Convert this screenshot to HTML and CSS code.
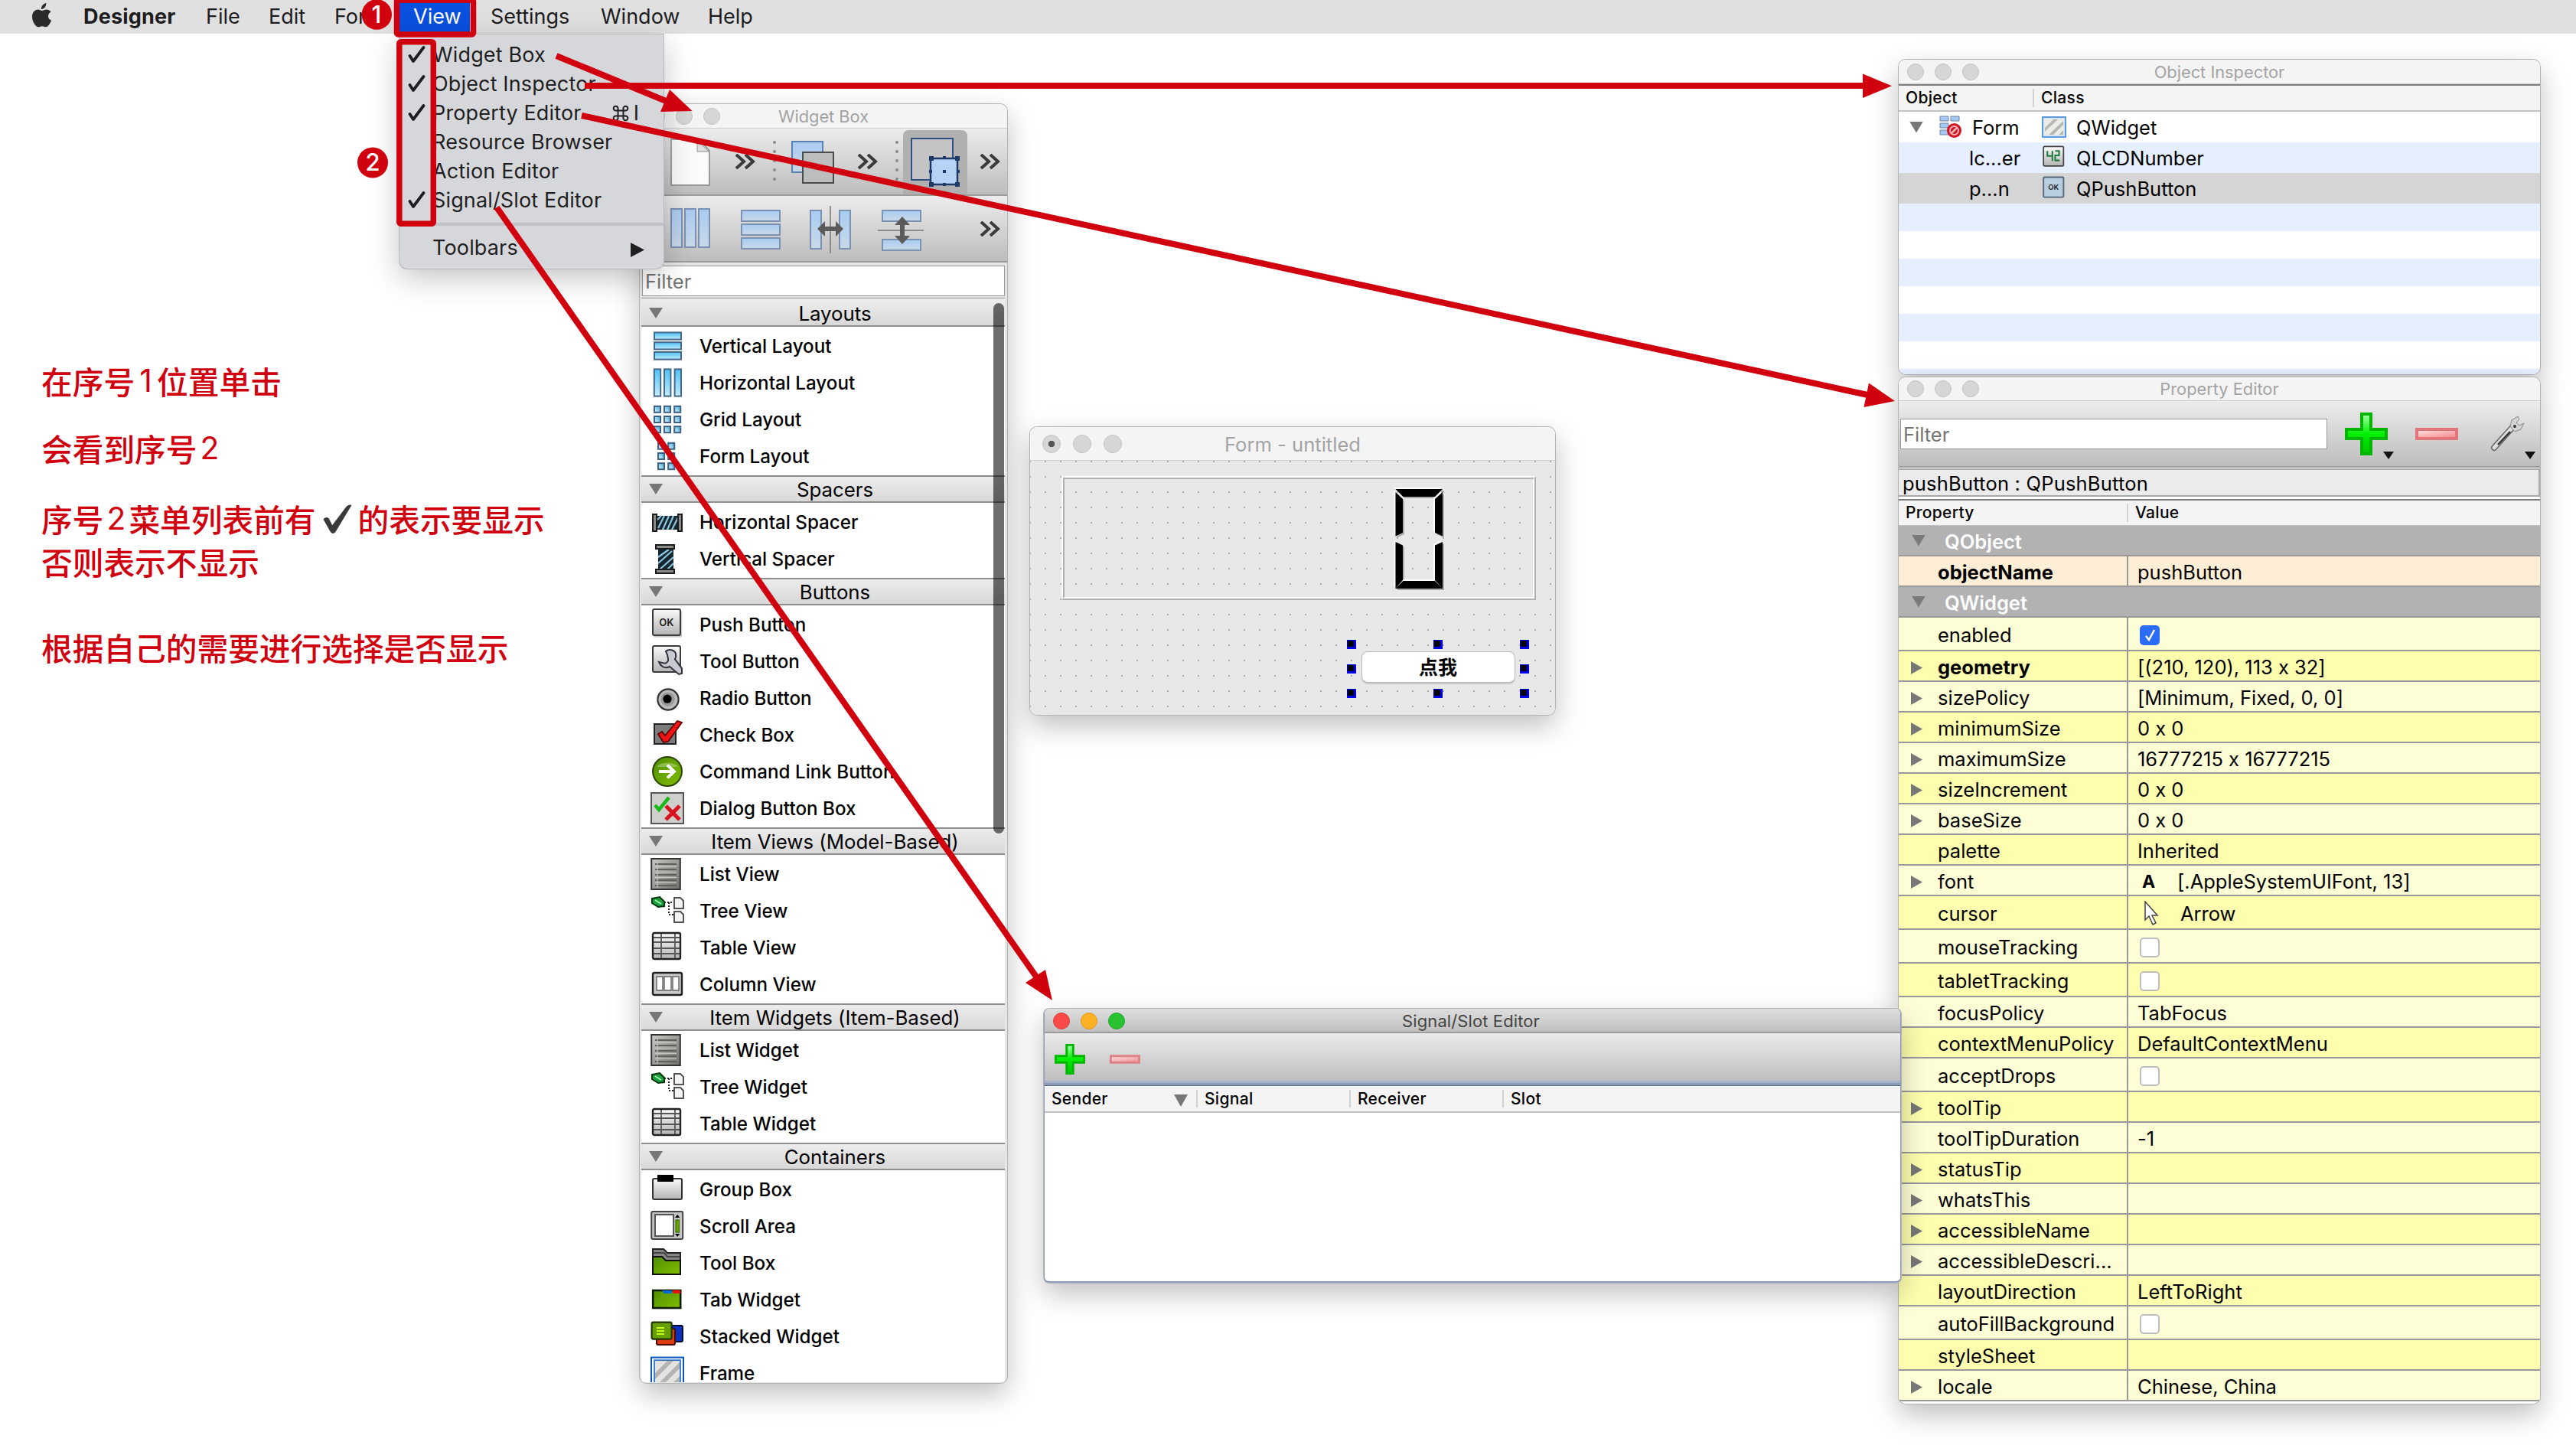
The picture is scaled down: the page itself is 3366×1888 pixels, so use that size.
FILE: index.html
```html
<!DOCTYPE html>
<html lang="zh-CN">
<head>
<meta charset="utf-8">
<title>Designer</title>
<link rel="stylesheet" href="styles.css">
</head>
<body>
<svg class="defs" width="0" height="0">
  <defs>
    <linearGradient id="cy" x1="0" y1="0" x2="0" y2="1"><stop offset="0" stop-color="#4cc3f5"/><stop offset="1" stop-color="#c5ecfb"/></linearGradient>
    <linearGradient id="cyd" x1="1" y1="0" x2="0" y2="1"><stop offset="0" stop-color="#37a9dc"/><stop offset="1" stop-color="#e4f7ff"/></linearGradient>
    <linearGradient id="bl" x1="0" y1="0" x2="0" y2="1"><stop offset="0" stop-color="#a9cbf2"/><stop offset="1" stop-color="#c9d9e8"/></linearGradient>
    <linearGradient id="gr" x1="0" y1="0" x2="0" y2="1"><stop offset="0" stop-color="#fafafa"/><stop offset="1" stop-color="#b4b4b4"/></linearGradient>
    <linearGradient id="gd" x1="0" y1="0" x2="1" y2="1"><stop offset="0" stop-color="#c8c8c4"/><stop offset="1" stop-color="#6e6e6a"/></linearGradient>
    <linearGradient id="gn" x1="0" y1="0" x2="1" y2="1"><stop offset="0" stop-color="#4f8f00"/><stop offset="1" stop-color="#80bd00"/></linearGradient>
    <linearGradient id="pl" x1="0" y1="0" x2="0" y2="1"><stop offset="0" stop-color="#9dff9d"/><stop offset=".5" stop-color="#00f000"/><stop offset="1" stop-color="#00c800"/></linearGradient>
    <linearGradient id="mi" x1="0" y1="0" x2="1" y2="1"><stop offset="0" stop-color="#ffd9d9"/><stop offset="1" stop-color="#f58d92"/></linearGradient>
  </defs>
  <symbol id="i-vl" viewBox="0 0 22 22"><g fill="url(#cy)" stroke="#46688a"><rect x="2.5" y="2.2" width="17.5" height="4.6"/><rect x="2.5" y="8.6" width="17.5" height="4.6"/><rect x="2.5" y="15" width="17.5" height="4.8"/></g></symbol>
  <symbol id="i-hl" viewBox="0 0 22 22"><g fill="url(#cy)" stroke="#46688a"><rect x="2.4" y="2.2" width="4.2" height="17.6"/><rect x="9" y="2.2" width="4.2" height="17.6"/><rect x="15.8" y="2.2" width="4.2" height="17.6"/></g></symbol>
  <symbol id="i-gl" viewBox="0 0 22 22"><g fill="url(#cyd)" stroke="#3f5f80"><rect x="2.5" y="2.4" width="4" height="4"/><rect x="9" y="2.4" width="4" height="4"/><rect x="15.6" y="2.4" width="4" height="4"/><rect x="2.5" y="9" width="4" height="4"/><rect x="9" y="9" width="4" height="4"/><rect x="15.6" y="9" width="4" height="4"/><rect x="2.5" y="15.6" width="4" height="4"/><rect x="9" y="15.6" width="4" height="4"/><rect x="15.6" y="15.6" width="4" height="4"/></g></symbol>
  <symbol id="i-fl" viewBox="0 0 22 22"><g fill="url(#cyd)" stroke="#3f5f80"><rect x="5" y="2.4" width="4" height="4"/><rect x="11.6" y="2.4" width="4" height="4"/><rect x="5" y="9" width="4" height="4"/><rect x="11.6" y="9" width="4" height="4"/><rect x="5" y="15.6" width="4" height="4"/><rect x="11.6" y="15.6" width="4" height="4"/></g></symbol>
  <symbol id="i-hs" viewBox="0 0 22 22"><path d="M4 7h14v9H4z" fill="#152832"/><path d="M5 15l4-8M8 16l4-9M11 16l4-9M14 16l4-8M4 10l3-3" stroke="#8ec4dc" stroke-width="1.1"/><rect x="1.5" y="6" width="2.5" height="11" fill="#8a8a8a" stroke="#1c1c1c"/><rect x="18" y="6" width="2.500" height="11" fill="#8a8a8a" stroke="#1c1c1c"/></symbol>
  <symbol id="i-vs" viewBox="0 0 22 22"><path d="M5 4h10v15H5z" fill="#152832"/><path d="M5 10l7-5M5 14l9-8M6 18l9-8M10 19l5-5" stroke="#8ec4dc" stroke-width="1.1"/><rect x="3.5" y="2" width="12" height="2.5" fill="#8a8a8a" stroke="#1c1c1c"/><rect x="3.5" y="18" width="12" height="2.5" fill="#8a8a8a" stroke="#1c1c1c"/></symbol>
  <symbol id="i-pb" viewBox="0 0 22 22"><rect x="2" y="2" width="18.6" height="17.4" rx="1" fill="#777" opacity=".4"/><rect x="1.5" y="1" width="18" height="17" rx="1" fill="url(#gr)" stroke="#3a3a3a"/><text x="10.4" y="12.2" text-anchor="middle" class="ok">OK</text></symbol>
  <symbol id="i-tb" viewBox="0 0 22 22"><rect x="1.5" y="1" width="18" height="17" rx="1" fill="url(#gr)" stroke="#3a3a3a"/><path d="M10 4.500c2.500-2 6-.5 6.500 1.500.4 1.500 0 2.700-.5 3.700l4.500 6V19l-2 .5-6-5c-2.500 1.200-5.500.6-7-3l3.500.8c1.500.3 3-1.500 2.500-3l-.5-2.500z" fill="#c9c9d4" stroke="#33333c" stroke-width="1"/></symbol>
  <symbol id="i-rb" viewBox="0 0 22 22"><circle cx="11.500" cy="12" r="6.800" fill="#bbb" stroke="#333" stroke-width="1.100"/><circle cx="11.300" cy="11.800" r="4.600" fill="#999"/><circle cx="11" cy="11.600" r="2.800" fill="#000"/></symbol>
  <symbol id="i-cb" viewBox="0 0 22 22"><rect x="2.500" y="4" width="14" height="13" fill="#7b7b7b" stroke="#222"/><path d="M5 10.500l2.500-1.500 2 2.500 8-9.500 3 1-9 12.500-3 .5z" fill="#f01414" stroke="#5d0000" stroke-width=".9"/></symbol>
  <symbol id="i-cl" viewBox="0 0 22 22"><circle cx="11" cy="11" r="9.500" fill="url(#gn)" stroke="#2a4400" stroke-width="1"/><path d="M4 8a8 5 0 0 1 14 0z" fill="#fff" opacity=".3"/><path d="M5.500 11h9M11 6.800l4.500 4.200-4.500 4.200" fill="none" stroke="#fff" stroke-width="2"/></symbol>
  <symbol id="i-db" viewBox="0 0 22 22"><rect x=".5" y="1" width="21" height="20" fill="#cfcfcb" stroke="#555"/><path d="M3 9l2.500 3L12 4" fill="none" stroke="#18b818" stroke-width="2.200"/><path d="M10 9.500l9 9M19 9.500l-9 9" stroke="#d81420" stroke-width="2.600"/></symbol>
  <symbol id="i-lv" viewBox="0 0 22 22"><rect x=".6" y="1" width="18.800" height="20" fill="url(#gd)" stroke="#333"/><path d="M3 4.500h14M3 8h14M3 11.500h14M3 15h14M3 18.500h14" stroke="#5f5f5c" stroke-width="1.100"/><path d="M3 6.200h14M3 9.700h14M3 13.200h14M3 16.700h14M4.500 3v17" stroke="#c4c4c0" stroke-width=".6"/></symbol>
  <symbol id="i-tv" viewBox="0 0 22 22"><path d="M1 3l5-1 3 3v3l-4 .5L1 6z" fill="#1aa038" stroke="#053510"/><path d="M3 4l4 2.500" stroke="#a5f0b5"/><path d="M9 5.500h6M12 5.500v8h3" fill="none" stroke="#222" stroke-dasharray="1 1"/><path d="M15.500 2.500h4l2 2v5h-6zM15.500 11.500h4l2 2v5h-6z" fill="#f4f4f4" stroke="#555"/></symbol>
  <symbol id="i-tw" viewBox="0 0 22 22"><rect x="1.500" y="1.500" width="18" height="17" rx="1" fill="url(#gr)" stroke="#222" stroke-width="1.200"/><path d="M2 4.500h17M2 7.500h17M2 11.500h17M2 15h17M7 2v16M16 2v16" stroke="#555" stroke-width=".9"/></symbol>
  <symbol id="i-cv" viewBox="0 0 22 22"><rect x="1.500" y="3.500" width="19" height="14.500" rx="1" fill="#c8c8c8" stroke="#222" stroke-width="1.200"/><path d="M4 6h4v9H4zM9 6h4.500v9H9zM14.500 6h4v9h-4z" fill="#fff" stroke="#666" stroke-width=".7"/></symbol>
  <symbol id="i-gb" viewBox="0 0 22 22"><rect x="1.500" y="4" width="19" height="13.500" rx="1" fill="url(#gr)" stroke="#333"/><rect x="4.500" y="1.500" width="10.500" height="4.500" fill="#000"/></symbol>
  <symbol id="i-sa" viewBox="0 0 22 22"><rect x=".6" y="1.500" width="20.500" height="18" rx="1" fill="#c4c4c4" stroke="#444"/><rect x="3" y="3.500" width="12" height="14" fill="#fff" stroke="#555"/><rect x="16.500" y="7" width="2.200" height="8" fill="#6aa800" stroke="#3c6800" stroke-width=".6"/><path d="M16 5.500l1.600-2 1.600 2zM16 16l1.600 2 1.600-2z"/></symbol>
  <symbol id="i-bx" viewBox="0 0 22 22"><path d="M1.500 2h7l2.500 2.500h8.500V18h-18z" fill="#858585" stroke="#222"/><path d="M2 4.500h7l2 2.500h8.500" fill="none" stroke="#333" stroke-width=".7"/><path d="M1.500 7h6l2.500 2.500h9.500V18.500h-18z" fill="url(#gn)" stroke="#111"/></symbol>
  <symbol id="i-ta" viewBox="0 0 22 22"><rect x="1.600" y="5" width="18" height="11.500" fill="url(#gn)" stroke="#0e1c00" stroke-width="1.300"/><path d="M7.500 5h6.500v2H9z" fill="#0068d8"/><path d="M14.500 4.800h5V7h-5z" fill="#e81010"/></symbol>
  <symbol id="i-sw" viewBox="0 0 22 22"><rect x="12" y="4" width="9" height="10.500" rx="1" fill="#0a32c0" stroke="#000a30"/><rect x="4" y="6" width="12" height="10.500" rx="1" fill="#dd3a10" stroke="#4a0c00"/><rect x=".8" y="1.800" width="13" height="11" rx="1" fill="#67a000" stroke="#203500" stroke-width="1.100"/><path d="M4 5.500h5M4 7.500h5M4 9.500h5" stroke="#c6ff20"/></symbol>
  <symbol id="i-fr" viewBox="0 0 22 22"><rect x=".5" y=".8" width="21" height="21" fill="#fff" stroke="#0a55b8"/><rect x="2.500" y="2.600" width="17" height="18" fill="#e4e4e2" stroke="#2a74c8" stroke-width=".9"/><path d="M3 11l8-8h4L3 15zM3 20L19 4v4L7 20zM12 20l7-7v4l-3 3z" fill="#b4b4b0"/></symbol>
  <symbol id="i-lcd" viewBox="0 0 22 22"><rect x="1.500" y="1" width="18" height="17.500" rx="1" fill="url(#gr)" stroke="#444" stroke-width="1.200"/><path d="M5 5v4.500h4.500V5M9.500 9.500V14M12 5h3.500v4H12v4.500h4" fill="none" stroke="#1c7a3c" stroke-width="1.400"/></symbol>
  <symbol id="i-plus" viewBox="0 0 56 56"><path d="M20 0h16v20h20v16H36v20H20V36H0V20h20z" fill="#00b400"/><path d="M24 4h8v20h20v8H32v20h-8V32H4v-8h20z" fill="url(#pl)"/></symbol>
  <symbol id="i-minus" viewBox="0 0 56 16"><path d="M0 0h56v16H0z" fill="#e2757a"/><path d="M4 4h48v8H4z" fill="url(#mi)"/></symbol>
  <symbol id="i-more" viewBox="0 0 28 20"><path d="M2 1l10 9-10 9M14 1l10 9-10 9" fill="none" stroke="#3b3b3b" stroke-width="4"/></symbol>
  <symbol id="i-tick" viewBox="0 0 23 22"><path d="M2.500 13l4.500 7L20.500 2" fill="none" stroke="#1f1f22" stroke-width="3.800" stroke-linecap="round" stroke-linejoin="round"/></symbol>
</svg>

<header class="menubar">
  <svg class="apple" viewBox="0 0 26 32"><path d="M18.300 0c.3 2.500-.8 4.600-2.100 6.100-1.300 1.400-2.900 2.100-4.300 1.900-.2-2.300.8-4.300 2-5.600C15.200 1 16.900.1 18.300 0z"/><path d="M25 22.600c-1.500 4.500-4.200 8.700-7 8.700-1.900 0-2.700-1.100-4.900-1.100s-3 1.100-4.900 1.100C4.600 31.300 0 24.500 0 18 0 12.200 3.500 8.500 7.600 8.500c2.200 0 4 1.400 5.400 1.400 1.300 0 3.300-1.500 5.900-1.500 2.100 0 4.300 1.100 5.700 3.100-5.300 3.200-4.300 9.500.4 11.100z"/></svg>
  <b class="mb-app">Designer</b><span class="mb-file">File</span><span class="mb-edit">Edit</span><span class="mb-form">Form</span><span class="mb-view">View</span><span class="mb-set">Settings</span><span class="mb-win">Window</span><span>Help</span>
</header>

<section class="notes">
  <p>在序号<i class="n1">1</i>位置单击</p>
  <p>会看到序号<i class="n2">2</i></p>
  <p>序号<i class="n2">2</i>菜单列表前有<svg class="bigtick" viewBox="0 0 40 40"><path d="M1 20c3-4 7-3 8 0l4 8L31 4c3-4 7-4 8-3L18 36c-2 4-6 4-8 0z"/></svg>的表示要显示</p>
  <p>否则表示不显示</p>
  <p>根据自己的需要进行选择是否显示</p>
</section>

<section class="win wbox">
  <div class="title"><span class="lights"><i></i><i></i><i></i></span>Widget Box</div>
  <div class="tools">
    <svg viewBox="0 0 480 86" width="480" height="86">
      <path d="M41 14h36l14 15v45H41z" fill="url(#gr)" stroke="#8b8b8b" stroke-width="1.500"/><path d="M42 15h33v16h15v42H42z" fill="#fbfbfb"/><path d="M75 15v15h15z" fill="#ddd" stroke="#999"/>
      <use href="#i-more" x="124" y="33" width="28" height="20"/>
      <g fill="#8a8a8a"><circle cx="176" cy="18" r="2"/><circle cx="176" cy="30" r="2"/><circle cx="176" cy="42" r="2"/><circle cx="176" cy="54" r="2"/><circle cx="176" cy="66" r="2"/><circle cx="336" cy="18" r="2"/><circle cx="336" cy="30" r="2"/><circle cx="336" cy="42" r="2"/><circle cx="336" cy="54" r="2"/><circle cx="336" cy="66" r="2"/></g>
      <rect x="199" y="17" width="40" height="40" fill="url(#bl)" stroke="#5a80b4" stroke-width="2"/><rect x="213" y="31" width="40" height="40" fill="#bdbdbd" stroke="#4c4c4c" stroke-width="2"/>
      <use href="#i-more" x="284" y="33" width="28" height="20"/>
      <path d="M344 86V10q0-8 8-8h68q8 0 8 8v76z" fill="#b0b0b0"/>
      <rect x="355" y="13" width="54" height="54" fill="#c4c4c4" stroke="#2f5080" stroke-width="2"/><rect x="380" y="39" width="35" height="34" fill="#b6d2f4" stroke="#1c3a68" stroke-width="2.500"/>
      <g fill="#1c3a68"><path d="M378 36h6v6h-6zM412 36h6v6h-6zM378 70h6v6h-6zM412 70h6v6h-6zM396 54h4v4h-4zM396 36h4v4h-4zM396 71h4v4h-4zM378 54h4v4h-4zM414 54h4v4h-4z"/></g>
      <use href="#i-more" x="444" y="33" width="28" height="20"/>
    </svg>
  </div>
  <div class="tools">
    <svg viewBox="0 0 480 86" width="480" height="86">
      <g fill="url(#bl)" stroke="#7b91b2" stroke-width="2"><path d="M41 17h14v50H41z"/><path d="M59 17h14v50H59z"/><path d="M77 17h14v50H77z"/><path d="M133 19h50v14h-50z"/><path d="M133 37h50v14h-50z"/><path d="M133 55h50v14h-50z"/><path d="M223 19h14v50h-14z"/><path d="M261 19h14v50h-14z"/><path d="M317 19h50v14h-50z"/><path d="M317 57h50v14h-50z"/></g>
      <path d="M249 13v62M311 45h60" stroke="#777" stroke-width="1.500"/>
      <path d="M232 43l10-10v7h14v-7l10 10-10 10v-7h-14v7zM343 27l10 11h-7v14h7l-10 11-10-11h7V38h-7z" fill="#5b5b5b"/>
      <use href="#i-more" x="444" y="33" width="28" height="20"/>
    </svg>
  </div>
  <div class="filter">Filter</div>
  <div class="list">
    <h3>Layouts</h3>
    <ul><li><svg><use href="#i-vl"/></svg>Vertical Layout</li><li><svg><use href="#i-hl"/></svg>Horizontal Layout</li><li><svg><use href="#i-gl"/></svg>Grid Layout</li><li><svg><use href="#i-fl"/></svg>Form Layout</li></ul>
    <h3>Spacers</h3>
    <ul><li><svg><use href="#i-hs"/></svg>Horizontal Spacer</li><li><svg><use href="#i-vs"/></svg>Vertical Spacer</li></ul>
    <h3>Buttons</h3>
    <ul><li><svg><use href="#i-pb"/></svg>Push Button</li><li><svg><use href="#i-tb"/></svg>Tool Button</li><li><svg><use href="#i-rb"/></svg>Radio Button</li><li><svg><use href="#i-cb"/></svg>Check Box</li><li><svg><use href="#i-cl"/></svg>Command Link Button</li><li><svg><use href="#i-db"/></svg>Dialog Button Box</li></ul>
    <h3>Item Views (Model-Based)</h3>
    <ul><li><svg><use href="#i-lv"/></svg>List View</li><li><svg><use href="#i-tv"/></svg>Tree View</li><li><svg><use href="#i-tw"/></svg>Table View</li><li><svg><use href="#i-cv"/></svg>Column View</li></ul>
    <h3>Item Widgets (Item-Based)</h3>
    <ul><li><svg><use href="#i-lv"/></svg>List Widget</li><li><svg><use href="#i-tv"/></svg>Tree Widget</li><li><svg><use href="#i-tw"/></svg>Table Widget</li></ul>
    <h3>Containers</h3>
    <ul><li><svg><use href="#i-gb"/></svg>Group Box</li><li><svg><use href="#i-sa"/></svg>Scroll Area</li><li><svg><use href="#i-bx"/></svg>Tool Box</li><li><svg><use href="#i-ta"/></svg>Tab Widget</li><li><svg><use href="#i-sw"/></svg>Stacked Widget</li><li><svg><use href="#i-fr"/></svg>Frame</li></ul>
    <div class="scroll"></div>
  </div>
</section>

<section class="menu">
  <div class="mi"><svg class="tick"><use href="#i-tick"/></svg>Widget Box</div>
  <div class="mi"><svg class="tick"><use href="#i-tick"/></svg>Object Inspector</div>
  <div class="mi"><svg class="tick"><use href="#i-tick"/></svg>Property Editor<svg class="cmd" viewBox="0 0 22 22"><path d="M7.500 7.500h7v7h-7zM7.500 7.500H4.700a2.900 2.900 0 1 1 2.800-2.800zM14.500 7.500V4.700a2.900 2.900 0 1 1 2.800 2.800zM14.500 14.500h2.800a2.900 2.900 0 1 1-2.800 2.800zM7.500 14.500v2.800a2.900 2.900 0 1 1-2.800-2.800z"/></svg>I</div>
  <div class="mi">Resource Browser</div>
  <div class="mi">Action Editor</div>
  <div class="mi"><svg class="tick"><use href="#i-tick"/></svg>Signal/Slot Editor</div>
  <hr>
  <div class="mi">Toolbars<i class="sub"></i></div>
</section>

<section class="win form">
  <div class="title"><span class="lights"><i class="dot"></i><i></i><i></i></span>Form - untitled</div>
  <div class="canvas">
    <div class="lcd">
      <svg viewBox="0 0 66 134" width="66" height="134">
        <g fill="#aaa" transform="translate(2 2)"><path d="M2.500 2H64L54 12H12.500zM2.500 6l9.500 9v44l-9.500 4.500zM64 6l-10 9v44l10 4.500zM2.500 71l9.500 4.500V121l-9.500 11zM64 71l-10 4.500V121l10 11zM12.500 122H54l10 10H2.500z"/></g>
        <g fill="#fff" transform="translate(-2 -2)"><path d="M2.500 2H64L54 12H12.500zM2.500 6l9.500 9v44l-9.500 4.500zM64 6l-10 9v44l10 4.500zM2.500 71l9.500 4.500V121l-9.500 11zM64 71l-10 4.500V121l10 11zM12.500 122H54l10 10H2.500z"/></g>
        <path d="M2.500 2H64L54 12H12.500zM2.500 6l9.500 9v44l-9.500 4.500zM64 6l-10 9v44l10 4.500zM2.500 71l9.500 4.500V121l-9.500 11zM64 71l-10 4.500V121l10 11zM12.500 122H54l10 10H2.500z"/>
      </svg>
    </div>
    <div class="sel">
      <i></i><i></i><i></i><i></i><b class="btn">点我</b><i></i><i></i><i></i><i></i>
    </div>
  </div>
</section>

<section class="win insp">
  <div class="title"><span class="lights"><i></i><i></i><i></i></span>Object Inspector</div>
  <div class="thead"><span class="c1">Object</span><span class="c2">Class</span></div>
  <div class="tree">
    <div class="tr"><i class="down"></i><svg class="fi" viewBox="0 0 30 30"><g fill="#a5c8f0" stroke="#6c87ac"><path d="M1 1h11v6H1zM15 1h11v6H15zM1 10h11v6H1zM1 19h11v6H1z"/></g><circle cx="19.500" cy="19.500" r="9.500" fill="#d01420"/><circle cx="19.500" cy="19.500" r="5.500" fill="none" stroke="#f3b4b8" stroke-width="2"/><path d="M15.500 23.500l8-8" stroke="#f3b4b8" stroke-width="2.500"/></svg><span class="o1">Form</span><svg class="ci" viewBox="0 0 32 32"><rect x="1" y="3" width="30" height="26" fill="#dbe7f4" stroke="#5b9bdc" stroke-width="2"/><path d="M4 6h24v20H4z" fill="#ecece8"/><path d="M4 17L15 6h6L4 22zM9 26L28 8v5L15 26zM22 26l6-6v6z" fill="#b8b8b2"/></svg>QWidget</div>
    <div class="tr alt"><span class="o2">lc...er</span><svg class="ci"><use href="#i-lcd"/></svg>QLCDNumber</div>
    <div class="tr cur"><span class="o2">p...n</span><svg class="ci" viewBox="0 0 22 22"><rect x="1.500" y="1" width="18" height="18" rx="1" fill="#b8cde0" stroke="#556878" stroke-width="1.300"/><text x="10.400" y="12.600" text-anchor="middle" class="ok">OK</text></svg>QPushButton</div>
    <div class="fill"></div>
  </div>
</section>

<section class="win prop">
  <div class="title"><span class="lights"><i></i><i></i><i></i></span>Property Editor</div>
  <div class="ptools">
    <div class="pfilter">Filter</div>
    <svg class="pplus"><use href="#i-plus"/></svg><i class="dd d1"></i>
    <svg class="pminus"><use href="#i-minus"/></svg>
    <svg class="wrench" viewBox="0 0 46 48"><path d="M33 12L6 42" stroke="#666" stroke-width="8" stroke-linecap="round"/><path d="M32 13L6 42" stroke="#ddd" stroke-width="5" stroke-linecap="round"/><path d="M27 21L11 38" stroke="#333" stroke-width="2.500"/><path d="M37 1l-8 5-2 8 6 7 8-3 4-8-6 3-4-4 4-4z" fill="#d4d4d4" stroke="#888"/><circle cx="33" cy="14" r="2" fill="#333"/></svg><i class="dd"></i>
  </div>
  <div class="plabel">pushButton : QPushButton</div>
  <div class="thead pt"><span class="c1">Property</span><span class="c2">Value</span></div>
  <div class="grp"><i class="down"></i>QObject</div>
  <div class="pr peach"><b>objectName</b><span>pushButton</span></div>
  <div class="grp"><i class="down"></i>QWidget</div>
  <div class="pr tall"><em>enabled</em><span><i class="chk on"><svg viewBox="0 0 26 26"><path d="M8 14l4 5 7-13"/></svg></i></span></div>
  <div class="pr y"><b><i class="rt"></i>geometry</b><span>[(210, 120), 113 x 32]</span></div>
  <div class="pr"><em><i class="rt"></i>sizePolicy</em><span>[Minimum, Fixed, 0, 0]</span></div>
  <div class="pr y"><em><i class="rt"></i>minimumSize</em><span>0 x 0</span></div>
  <div class="pr"><em><i class="rt"></i>maximumSize</em><span>16777215 x 16777215</span></div>
  <div class="pr y"><em><i class="rt"></i>sizeIncrement</em><span>0 x 0</span></div>
  <div class="pr"><em><i class="rt"></i>baseSize</em><span>0 x 0</span></div>
  <div class="pr y"><em>palette</em><span>Inherited</span></div>
  <div class="pr"><em><i class="rt"></i>font</em><span><b class="fa">A</b>[.AppleSystemUIFont, 13]</span></div>
  <div class="pr y tall"><em>cursor</em><span><svg class="cur-i" viewBox="0 0 20 32"><path d="M2 1v24l5-5 5 11 4-2-5-10h7z"/></svg>Arrow</span></div>
  <div class="pr tall"><em>mouseTracking</em><span><i class="chk"></i></span></div>
  <div class="pr y tall"><em>tabletTracking</em><span><i class="chk"></i></span></div>
  <div class="pr"><em>focusPolicy</em><span>TabFocus</span></div>
  <div class="pr y"><em>contextMenuPolicy</em><span>DefaultContextMenu</span></div>
  <div class="pr tall"><em>acceptDrops</em><span><i class="chk"></i></span></div>
  <div class="pr y"><em><i class="rt"></i>toolTip</em><span></span></div>
  <div class="pr"><em>toolTipDuration</em><span>-1</span></div>
  <div class="pr y"><em><i class="rt"></i>statusTip</em><span></span></div>
  <div class="pr"><em><i class="rt"></i>whatsThis</em><span></span></div>
  <div class="pr y"><em><i class="rt"></i>accessibleName</em><span></span></div>
  <div class="pr"><em><i class="rt"></i>accessibleDescri...</em><span></span></div>
  <div class="pr y"><em>layoutDirection</em><span>LeftToRight</span></div>
  <div class="pr tall"><em>autoFillBackground</em><span><i class="chk"></i></span></div>
  <div class="pr y"><em>styleSheet</em><span></span></div>
  <div class="pr"><em><i class="rt"></i>locale</em><span>Chinese, China</span></div>
</section>

<section class="win sig">
  <div class="title"><span class="lights"><i class="r"></i><i class="o"></i><i class="g"></i></span>Signal/Slot Editor</div>
  <div class="stools"><svg class="splus"><use href="#i-plus"/></svg><svg class="sminus"><use href="#i-minus"/></svg></div>
  <div class="band"></div>
  <div class="thead st"><span>Sender<i class="down"></i></span><span>Signal</span><span>Receiver</span><span>Slot</span></div>
</section>

<svg class="marks" viewBox="0 0 3366 1888" width="3366" height="1888">
  <g fill="none" stroke="#d0000e" stroke-width="7.500"><rect x="518.500" y="0" width="100" height="45" rx="2"/><rect x="521.800" y="54.800" width="44.500" height="237.500" rx="2"/></g>
  <g stroke="#d0000e" stroke-width="8"><path d="M727 73L875 134M764 112H2440M760 151L2445 517M649 271L1356 1279"/></g>
  <g fill="#d0000e"><path d="M904.500 145L875 117 863 146zM2472 112.300L2434 96.500V128zM2476 524L2442 500.500 2435.500 532zM1375 1307L1366 1267 1340 1284z"/><circle cx="492.300" cy="19" r="19.700"/><circle cx="487" cy="212.500" r="20"/></g>
  <text x="492" y="30" text-anchor="middle">1</text><text x="487" y="223" text-anchor="middle">2</text>
</svg>
</body>
</html>
```
FILE: styles.css
```css
* { box-sizing: border-box; }
body { margin: 0; width: 3366px; height: 1888px; position: relative; overflow: hidden; background: #fff; font-family: Inter, "Noto Sans CJK SC", sans-serif; font-size: 25.5px; font-feature-settings: "calt" 0; color: #000; }
i, em { font-style: normal; }
.defs { position: absolute; }
.ok { font: 600 6.5px Inter, sans-serif; fill: #222; }

.menubar { display: flex; height: 44px; line-height: 44px; background: #e0e0e0; padding-left: 42px; font-size: 27px; color: #1d1d1f; white-space: nowrap; }
.apple { width: 26px; height: 32px; margin: 4px 41px 0 0; fill: #2b2b2b; }
.mb-app { width: 160px; font-weight: 700; letter-spacing: .2px; }
.mb-file { width: 82px; }
.mb-edit { width: 86px; }
.mb-form { width: 85px; }
.mb-view { width: 92px; margin-right: 27px; padding-left: 18px; background: #0a50df; color: #fff; }
.mb-set { width: 144px; }
.mb-win { width: 140px; }

.notes { position: absolute; left: 54px; top: 470px; color: #d0000e; font: 500 40.7px/56px "Noto Sans CJK SC", sans-serif; }
.notes p { margin: 0 0 32px; height: 56px; white-space: nowrap; display: flex; align-items: center; }
.notes p:nth-child(2) { margin-bottom: 36px; }
.notes p:nth-child(3) { margin-bottom: 0; }
.notes p:nth-child(4) { margin-bottom: 56px; }
.n1, .n2 { font-family: Inter, sans-serif; font-weight: 400; text-align: center; }
.n1 { width: 29px; }
.n2 { width: 33px; }
.bigtick { width: 40px; height: 39px; margin: 0 7px 0 8px; fill: #3a3a3a; }

.win { position: absolute; background: #fff; border-radius: 9px; box-shadow: 0 0 0 1px #b4b4b4, 0 14px 36px rgba(0,0,0,.26); overflow: hidden; }
.title { position: relative; height: 31px; line-height: 32px; text-align: center; font-size: 21.800px; color: #a3a3a3; background: #f4f4f4; border-bottom: 1px solid #cfcfcf; }
.lights { position: absolute; left: 11px; top: 5px; display: flex; gap: 14px; }
.lights i { width: 22px; height: 22px; border-radius: 50%; background: #d6d6d6; border: 1px solid #c2c2c2; }
.lights .r { background: #fc4a48; border-color: #e03a38; }
.lights .o { background: #fdb225; border-color: #e09a18; }
.lights .g { background: #28c231; border-color: #1ea627; }

.wbox { left: 836px; top: 136px; width: 480px; height: 1671px; background: #e6e6e6; }
.wbox .title { height: 32px; }
.tools { height: 88px; background: linear-gradient(#ececec, #bdbdbd); border-bottom: 2px solid #9c9c9c; }
.tools:nth-child(3) { height: 87px; }
.tools svg { display: block; }
.filter { margin: 4px 3px 2px; height: 40px; border: 1.500px solid #979797; background: #fff; color: #747474; line-height: 39px; padding-left: 3px; }
.list { position: relative; margin: 0 3px 0 2px; height: 1417px; overflow: hidden; border-top: 1px solid #8c8c8c; padding-top: 1px; background: #fff; }
.list h3 { margin: 0; height: 36px; line-height: 33px; font-size: 25.800px; font-weight: 400; text-align: center; padding-left: 31px; border-top: 2px solid #8e8e8e; border-bottom: 2px solid #8e8e8e; background: linear-gradient(#ececec, #d8d8d8); position: relative; }
.list h3:first-child { border-top-color: #ececec; }
.list h3::before { content: ""; position: absolute; left: 10px; top: 9px; width: 18px; height: 14px; background: #777; clip-path: polygon(0 0, 100% 0, 50% 100%); }
.list ul { margin: 0; padding: 1px 0 1px 12px; list-style: none; }
.list li { display: flex; align-items: center; height: 48px; gap: 20px; white-space: nowrap; font-size: 24.200px; font-weight: 450; }
.list li svg { width: 44px; height: 44px; }
.scroll { position: absolute; right: 1px; top: 6px; width: 14px; height: 693px; border-radius: 7px; background: rgba(0,0,0,.57); }

.menu { position: absolute; left: 522px; top: 45px; width: 345px; height: 306px; padding-top: 8px; background: #d6d7db; border-radius: 0 0 10px 10px; box-shadow: 0 0 0 1px #b9b9bb, 0 12px 40px rgba(0,0,0,.24); font-size: 27px; letter-spacing: .15px; color: #1f1f22; }
.mi { position: relative; height: 38px; line-height: 37px; padding-left: 43px; white-space: nowrap; }
.tick { position: absolute; left: 11px; top: 7px; width: 23px; height: 22px; }
.cmd { width: 22px; height: 22px; margin: 0 6px -2px 40px; fill: none; stroke: #1f1f22; stroke-width: 2; }
.menu hr { margin: 10px 0 10px; border: 0; height: 4px; background: #c2c3c7; }
.sub { position: absolute; left: 302px; top: 12px; width: 18px; height: 19px; background: #1f1f22; clip-path: polygon(0 0, 100% 50%, 0 100%); }

.form { left: 1346px; top: 558px; width: 686px; height: 376px; }
.form .title { height: 44px; line-height: 45px; font-size: 25.600px; }
.form .lights { left: 16px; top: 10px; gap: 16px; }
.form .lights i { width: 24px; height: 24px; }
.form .lights .dot { background: radial-gradient(circle, #555 0 4px, #d6d6d6 4.500px); }
.canvas { position: relative; height: 332px; background: conic-gradient(from 270deg at 2px 2px, #ababab 90deg, #e8e8e8 0) -1px 0 / 20px 20px; }
.lcd { position: absolute; left: 41px; top: 20px; width: 620px; height: 162px; padding: 13px 0 0 432px; border: 2px solid; border-color: #fff #b0b0b0 #b0b0b0 #fff; }
.lcd::after { content: ""; position: absolute; inset: 0; border: 2px solid; border-color: #b0b0b0 #fff #fff #b0b0b0; }
.lcd svg { display: block; overflow: visible; }
.sel { position: absolute; left: 414px; top: 234px; width: 238px; height: 76px; display: grid; grid-template: 12px 40px 12px / 12px 200px 12px; row-gap: 6px; column-gap: 7px; align-items: center; justify-items: center; }
.sel i { width: 12px; height: 12px; background: #000; border: 2px solid #0000f0; border-width: 1px 3px 3px 1px; }
.btn { width: 199px; height: 39px; margin-top: -5px; line-height: 37px; border-radius: 7px; background: #fff; box-shadow: 0 0 0 1px #bbb, 0 2px 2px #aaa; text-align: center; font-size: 25px; font-weight: 700; font-family: "Noto Sans CJK SC", sans-serif; }

.thead { display: flex; height: 36px; line-height: 33px; background: #f4f4f4; border-top: 2px solid #7e7e7e; border-bottom: 2px solid #c2c2c2; font-size: 21px; font-weight: 500; letter-spacing: .3px; }
.insp { left: 2481px; top: 78px; width: 838px; height: 411px; }
.insp .title { height: 32px; }
.c1 { width: 177px; margin: 4px 0; border-right: 2px solid #d2d2d2; padding-left: 9px; line-height: 24px; }
.c2 { margin: 4px 0; padding-left: 9px; line-height: 24px; }
.tr { display: flex; align-items: center; height: 40px; white-space: nowrap; }
.alt { background: #e5efff; }
.cur { background: #d5d5d5; }
.down { width: 18px; height: 15px; background: #777; clip-path: polygon(0 0, 100% 0, 50% 100%); }
.tr .down { margin: 0 21px 0 14px; }
.fi { width: 30px; height: 30px; margin-right: 13px; }
.o1 { width: 91px; }
.o2 { width: 95px; margin-left: 92px; }
.ci { width: 32px; height: 32px; margin-right: 13px; }
.fill { height: 224px; background: repeating-linear-gradient(#e5efff 0 36px, #fff 36px 72px); }

.prop { left: 2481px; top: 493px; width: 838px; height: 1341px; }
.prop .title { line-height: 31px; }
.prop .lights { top: 4px; }
.ptools { position: relative; display: flex; align-items: center; height: 87px; background: linear-gradient(#ececec, #bdbdbd); border-bottom: 2px solid #9c9c9c; }
.pfilter { width: 558px; height: 40px; margin: 0 23px 0 2px; border: 1.500px solid #979797; background: #fff; color: #747474; line-height: 40px; padding-left: 3px; }
.pplus { width: 56px; height: 56px; margin-right: -6px; }
.dd { width: 14px; height: 10px; background: #111; clip-path: polygon(0 0, 100% 0, 50% 100%); margin-top: 57px; }
.d1 { margin-right: 28px; }
.pminus { width: 56px; height: 16px; margin-right: 41px; }
.wrench { width: 46px; height: 48px; }
.plabel { height: 37px; margin-top: 1px; border: 2px solid #a9a9a9; border-left-width: 0; background: #ebebeb; line-height: 36px; padding-left: 5px; margin-bottom: 3px; letter-spacing: .2px; }
.pt { height: 36px; margin-bottom: -1px; }
.pt .c1 { width: 300px; }
.grp { position: relative; display: flex; align-items: center; height: 40px; padding-top: 3px; background: #b2b2b2; border-bottom: 2px solid #989898; color: #fff; font-weight: 600; }
.grp .down { margin: -3px 25px 0 17px; background: #7a7a7a; }
.pr { display: flex; height: 40px; line-height: 42px; background: #fefed6; border-bottom: 2px solid #999; white-space: nowrap; }
.pr.tall { height: 44px; line-height: 46px; }
.pr.y { background: #fefeae; }
.pr.peach { background: #ffeed6; }
.pr > :first-child { position: relative; width: 300px; padding-left: 51px; border-right: 2px solid #999; }
.pr b { font-weight: 700; }
.pr > span { display: flex; align-items: center; padding: 4px 0 0 12px; }
.rt { position: absolute; left: 16px; top: 13px; width: 15px; height: 17px; background: #777; clip-path: polygon(0 0, 100% 50%, 0 100%); }
.chk { width: 26px; height: 26px; margin-left: 3px; border-radius: 5px; background: #fff; border: 2px solid #bdbdbd; }
.chk.on { background: #2d6cf6; border: 0; }
.chk svg { display: block; fill: none; stroke: #fff; stroke-width: 2.500; }
.fa { width: 52px; padding-left: 6px; font-size: 23px; }
.cur-i { width: 20px; height: 32px; margin: -2px 28px 0 8px; fill: #fff; stroke: #444; stroke-width: 1.500; }

.sig { left: 1364px; top: 1318px; width: 1120px; height: 358px; border-radius: 7px; border: 0 solid #8f9dc4; border-width: 0 1px 2px 1px; }
.sig .title { height: 32px; color: #444; font-size: 22px; letter-spacing: .1px; padding-right: 4px; background: linear-gradient(#dedede, #c0c0c0); border-bottom: 2px solid #9b9b9b; }
.stools { display: flex; align-items: center; gap: 32px; height: 62px; padding: 5px 0 0 13px; background: linear-gradient(#ebebeb, #bebebe); }
.splus { width: 40px; height: 40px; }
.sminus { width: 40px; height: 12px; opacity: .85; }
.band { height: 7px; background: linear-gradient(#a7b3cb 0 3px, #8d99b5 3px 6px, #5f6d94 6px); }
.st { border-top: 0; height: 35px; }
.st span { position: relative; width: 200px; margin: 5px 0; line-height: 24px; padding-left: 9px; border-right: 2px solid #d2d2d2; }
.st span:last-child { border: 0; }
.st .down { position: absolute; right: 11px; top: 6px; height: 16px; }

.marks { position: absolute; left: 0; top: 0; }
.marks text { font: 500 31px Inter, sans-serif; fill: #fff; }
```
